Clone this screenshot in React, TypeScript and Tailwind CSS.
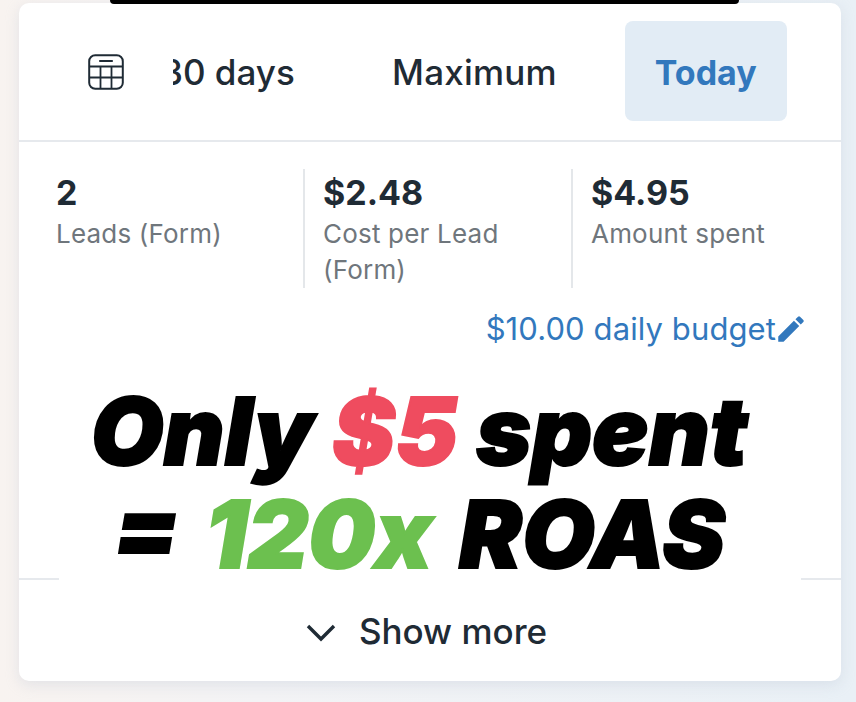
import React from "react";

function TableIcon() {
  return (
    <svg width="36" height="36" viewBox="0 0 36 36" fill="none" stroke="#1f2b35" strokeWidth="2" className="shrink-0">
      <rect x="1.2" y="1.2" width="33.6" height="33.6" rx="6" />
      <path d="M1.2 12.5H34.8M1.2 23.5H34.8M12.5 12.5V34.8M23.5 12.5V34.8" strokeWidth="1.8" />
      <path d="M12 7H24" strokeWidth="2.2" strokeLinecap="round" />
    </svg>
  );
}

function Stat({ value, label, divided, width }: { value: string; label: React.ReactNode; divided?: boolean; width: string }) {
  return (
    <div className={`${width} ${divided ? "border-l-2 border-[#e4e7ea] pl-[18px]" : "pl-[37px]"} shrink-0 h-[119px]`}>
      <div className="text-[34px] leading-[40px] font-bold text-[#1f2b35] mt-[4px]">{value}</div>
      <div className="text-[26px] leading-[36px] tracking-[0.2px] text-[#6f767c] mt-[3px]">{label}</div>
    </div>
  );
}

export default function App() {
  return (
    <div
      className="relative w-[856px] h-[702px] overflow-hidden pt-[3px] px-[19px] bg-[linear-gradient(90deg,#f8f3f0_0%,#f3f3f5_30%,#e9f0f6_100%)]"
      style={{ fontFamily: '"Inter", "Noto Sans", sans-serif' }}
    >
      <div className="absolute left-[110px] top-0 w-[629px] h-[4px] bg-black rounded-b-[8px] z-20" />
      <div className="w-[822px] h-[678px] bg-white rounded-[10px] shadow-[0_4px_14px_rgba(180,190,205,0.3)] flex flex-col overflow-hidden">
        <div className="h-[139px] shrink-0 flex items-start border-b-2 border-[#e6e9ed]">
          <div className="w-[36px] shrink-0 ml-[69px] mt-[51px]"><TableIcon /></div>
          <div className="w-[121px] h-[102px] overflow-hidden mt-[18px] ml-[49px] shrink-0 flex items-center">
            <span className="text-[35px] font-medium text-[#1f2b35] whitespace-nowrap -ml-[12px]">30 days</span>
          </div>
          <div className="ml-[98px] mt-[18px] h-[102px] flex items-center shrink-0">
            <span className="text-[35px] tracking-[0.2px] font-medium text-[#1f2b35] whitespace-nowrap">Maximum</span>
          </div>
          <div className="ml-[68px] mt-[18px] w-[162px] h-[100px] rounded-[8px] bg-[#e2ecf5] flex items-center justify-center shrink-0">
            <span className="text-[34px] font-bold text-[#3278bd] pt-[2px]">Today</span>
          </div>
        </div>
        <div className="flex mt-[27px] shrink-0">
          <Stat value="2" label="Leads (Form)" width="w-[284px]" />
          <Stat value="$2.48" label={<>Cost per Lead<br />(Form)</>} divided width="w-[268px]" />
          <Stat value="$4.95" label="Amount spent" divided width="w-[268px]" />
        </div>
        <div className="flex items-center justify-end pr-[33px] mt-[18px] h-[46px] shrink-0">
          <span className="text-[31px] tracking-[0.1px] text-[#3278bd] whitespace-nowrap">$10.00 daily budget</span>
          <svg width="34" height="34" viewBox="0 0 24 24" fill="#3278bd" className="shrink-0 -ml-[2px]">
            <path d="M3 17.25V21h3.75L17.81 9.94l-3.75-3.75L3 17.25zM20.71 7.04a1 1 0 0 0 0-1.41l-2.34-2.34a1 1 0 0 0-1.41 0l-1.83 1.83 3.75 3.75 1.83-1.83z" />
          </svg>
        </div>
        <div
          className="relative z-10 mx-[40px] -mb-[4px] h-[230px] bg-white flex flex-col items-center text-[94px] leading-[103px] italic font-black text-black whitespace-nowrap pt-[28px] pr-[22px] [-webkit-text-stroke:2px_currentColor]"
          style={{ fontFamily: '"Inter", "Roboto", sans-serif' }}
        >
          <div>Only <span className="text-[#ef4c5f]">$5</span> spent</div>
          <div className="[word-spacing:8px]">= <span className="text-[#6cc04f]">120x</span> ROAS</div>
        </div>
        <div className="flex-1 border-t-2 border-[#e6e9ed] flex items-center justify-center gap-[22px] pr-[8px] pt-[2px]">
          <svg width="32" height="32" viewBox="0 0 32 32" fill="none" stroke="#1f2b35" strokeWidth="3.4" className="shrink-0">
            <path d="M3 10 16 23 29 10" />
          </svg>
          <span className="text-[35px] text-[#1f2b35] font-medium">Show more</span>
        </div>
      </div>
    </div>
  );
}
